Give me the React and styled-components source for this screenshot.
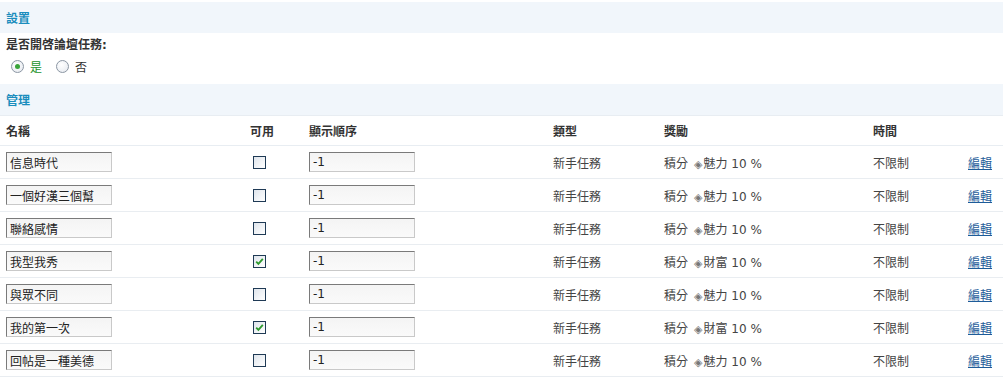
import React from "react";
import styled, { createGlobalStyle } from "styled-components";

const Global = createGlobalStyle`
  html, body { margin: 0; padding: 0; background: #fff; }
  body {
    font-family: "DejaVu Sans", "Noto Sans CJK TC", sans-serif;
    font-size: 12px;
    color: #333;
  }
`;

const Page = styled.div`
  width: 1003px;
  padding-top: 2px;
`;

const SectionBar = styled.div`
  height: 31px;
  display: flex;
  align-items: center;
  padding-left: 6px;
  background: #f1f6fb;
  color: #1a8dbd;
  font-weight: bold;
  font-family: "Noto Sans CJK TC", sans-serif;
  font-size: 12px;
`;

const SettingBlock = styled.div`
  padding: 3px 6px 7px;
  display: flex;
  flex-direction: column;
  gap: 1px;
`;

const Label = styled.div`
  font-weight: bold;
  font-family: "DejaVu Sans", "Noto Sans CJK TC", sans-serif;
  height: 17px;
  line-height: 17px;
  margin-top: 1px;
`;

const RadioRow = styled.div`
  display: flex;
  align-items: center;
  height: 22px;
  padding-left: 5px;
`;

const RadioOption = styled.label`
  display: inline-flex;
  align-items: center;
  gap: 6px;
  margin-right: 14px;
  color: ${(p) => (p.$checked ? "#22922a" : "#333")};
  font-family: "Noto Sans CJK TC", sans-serif;
`;

const RadioDot = styled.span`
  width: 11px;
  height: 11px;
  border-radius: 50%;
  border: 1px solid #8b96a3;
  background: radial-gradient(circle at 40% 35%, #ffffff 0%, #e4e8ee 100%);
  display: inline-flex;
  align-items: center;
  justify-content: center;
  &::after {
    content: "";
    width: 5px;
    height: 5px;
    border-radius: 50%;
    background: ${(p) => (p.$checked ? "#3aa43a" : "transparent")};
  }
`;

const Table = styled.table`
  width: 1003px;
  border-collapse: collapse;
  table-layout: fixed;
  font-family: "DejaVu Sans", "Noto Sans CJK TC", sans-serif;
  font-size: 12px;
`;

const HeadCell = styled.th`
  text-align: left;
  font-weight: bold;
  color: #333;
  height: 29px;
  padding: 0 0 0 6px;
  border-bottom: 1px solid #e8edf2;
  border-top: 1px solid #e8edf2;
`;

const Cell = styled.td`
  height: 32px;
  padding: 0 0 0 6px;
  border-bottom: 1px solid #e9edf1;
  color: #444;
  white-space: nowrap;
`;

const TextInput = styled.input`
  box-sizing: border-box;
  width: 106px;
  height: 20px;
  padding: 0 3px;
  font-family: "DejaVu Sans", "Noto Sans CJK TC", sans-serif;
  font-size: 12px;
  color: #222;
  background: linear-gradient(to bottom, #f4f4f4, #fafafa);
  border: 1px solid #c9c9c9;
  border-top-color: #7a7a7a;
  border-left-color: #7a7a7a;
  outline: none;
  display: block;
`;

const Check = styled.span`
  display: block;
  width: 11px;
  height: 11px;
  margin-left: 3px;
  border: 1px solid #1f3a55;
  background: linear-gradient(135deg, #dfe5ec 0%, #ffffff 100%);
  position: relative;
`;

const Diamond = styled.span`
  font-size: 11px;
  color: #777;
  margin: 0 1px 0 6px;
`;

const EditLink = styled.a`
  color: #1e5c99;
  text-decoration: underline;
  cursor: pointer;
`;

const CheckMark = () => (
  <svg width="11" height="11" viewBox="0 0 11 11" style={{ position: "absolute", left: 0, top: 0 }}>
    <path d="M2.2 5.6 L4.4 7.9 L8.8 2.8" fill="none" stroke="#2e9a2e" strokeWidth="1.8" />
  </svg>
);

const rows = [
  ["信息時代", false, "魅力"],
  ["一個好漢三個幫", false, "魅力"],
  ["聯絡感情", false, "魅力"],
  ["我型我秀", true, "財富"],
  ["與眾不同", false, "魅力"],
  ["我的第一次", true, "財富"],
  ["回帖是一種美德", false, "魅力"],
];

export default function App() {
  return (
    <Page>
      <Global />
      <SectionBar>設置</SectionBar>
      <SettingBlock>
        <Label>是否開啓論壇任務:</Label>
        <RadioRow>
          <RadioOption $checked>
            <RadioDot $checked />是
          </RadioOption>
          <RadioOption>
            <RadioDot />否
          </RadioOption>
        </RadioRow>
      </SettingBlock>
      <SectionBar>管理</SectionBar>
      <Table>
        <colgroup>
          <col style={{ width: 244 }} />
          <col style={{ width: 59 }} />
          <col style={{ width: 244 }} />
          <col style={{ width: 111 }} />
          <col style={{ width: 209 }} />
          <col style={{ width: 95 }} />
          <col style={{ width: 41 }} />
        </colgroup>
        <thead>
          <tr>
            <HeadCell>名稱</HeadCell>
            <HeadCell>可用</HeadCell>
            <HeadCell>顯示順序</HeadCell>
            <HeadCell>類型</HeadCell>
            <HeadCell>獎勵</HeadCell>
            <HeadCell>時間</HeadCell>
            <HeadCell />
          </tr>
        </thead>
        <tbody>
          {rows.map(([name, on, kind]) => (
            <tr key={name}>
              <Cell>
                <TextInput defaultValue={name} />
              </Cell>
              <Cell>
                <Check>{on && <CheckMark />}</Check>
              </Cell>
              <Cell>
                <TextInput defaultValue="-1" />
              </Cell>
              <Cell>新手任務</Cell>
              <Cell>
                積分<Diamond>◈</Diamond>
                {kind} 10 %
              </Cell>
              <Cell>不限制</Cell>
              <Cell>
                <EditLink>編輯</EditLink>
              </Cell>
            </tr>
          ))}
        </tbody>
      </Table>
    </Page>
  );
}
